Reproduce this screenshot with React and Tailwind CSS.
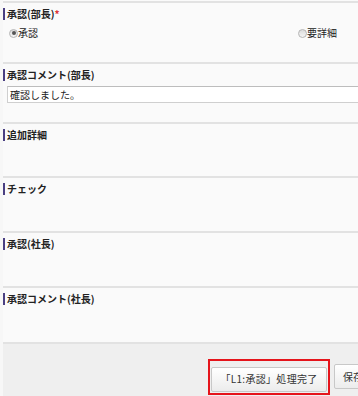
import React from "react";

const font = { fontFamily: '"Noto Sans CJK JP", "Noto Sans", sans-serif' };

function Label({ children, required }) {
  return (
    <div className="flex items-center mt-[5px] h-[12px]">
      <div className="w-[2px] h-[12px] bg-[#4a3f82]" />
      <span className="ml-[2px] text-[10px] font-bold leading-[12px] text-[#222]">
        {children}
        {required && <span className="text-[#d33]">*</span>}
      </span>
    </div>
  );
}

function Radio({ checked, label }) {
  return (
    <div className="flex items-center">
      <span className="w-[9px] h-[9px] rounded-full border border-[#b5b5b5] bg-gradient-to-b from-[#dcdcdc] to-[#f4f4f4] flex items-center justify-center">
        {checked && <span className="w-[4px] h-[4px] rounded-full bg-[#555]" />}
      </span>
      <span className="text-[10px] leading-[12px] text-[#222]">{label}</span>
    </div>
  );
}

export default function App() {
  return (
    <div className="w-[358px] h-[396px] bg-[#f7f7f7] overflow-hidden" style={font}>
      <div className="w-[420px] ml-[3px] pt-[1px] bg-[#fafafa]">
        <div className="h-[61px] border-t-2 border-[#e2e2e2]">
          <Label required>承認(部長)</Label>
          <div className="flex items-center mt-[7px] ml-[6px] w-[328px] justify-between">
            <Radio checked label="承認" />
            <Radio label="要詳細" />
          </div>
        </div>
        <div className="h-[60px] border-t-2 border-[#e2e2e2]">
          <Label>承認コメント(部長)</Label>
          <div className="mt-[5px] ml-[4px] h-[17px] border border-[#cfcfcf] border-t-[#bdbdbd] bg-white flex items-center pl-[2px]">
            <span className="text-[10px] leading-[12px] text-[#222]">確認しました。</span>
          </div>
        </div>
        <div className="h-[54px] border-t-2 border-[#e2e2e2]">
          <Label>追加詳細</Label>
        </div>
        <div className="h-[55px] border-t-2 border-[#e2e2e2]">
          <Label>チェック</Label>
        </div>
        <div className="h-[55px] border-t-2 border-[#e2e2e2]">
          <Label>承認(社長)</Label>
        </div>
        <div className="h-[56px] border-t-2 border-[#e2e2e2]">
          <Label>承認コメント(社長)</Label>
        </div>
        <div className="border-t-2 border-[#e2e2e2] bg-[#efefef] h-[60px] flex items-start pt-[15px] pl-[205px]">
          <div className="border-2 border-[#e5141b] p-[1px] pt-[3px]">
            <button className="h-[25px] w-[116px] border border-[#c8c8c8] rounded-[2px] bg-gradient-to-b from-[#ffffff] to-[#ececec] text-[10px] text-[#333] leading-[12px] tracking-[0.3px]">
              「L1:承認」処理完了
            </button>
          </div>
          <button className="ml-[4px] mt-[5px] h-[25px] px-[8px] border border-[#c8c8c8] rounded-[2px] bg-gradient-to-b from-[#ffffff] to-[#ececec] text-[10px] text-[#333] leading-[12px]">
            保存
          </button>
        </div>
      </div>
    </div>
  );
}
